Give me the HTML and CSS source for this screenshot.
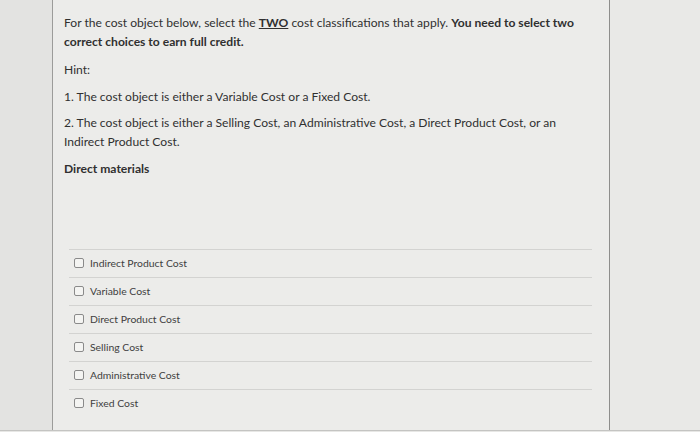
FILE: index.html
```html
<!DOCTYPE html>
<html>
<head>
<meta charset="utf-8">
<link rel="stylesheet" href="styles.css">
</head>
<body>
<div class="page">
  <div class="gutter"></div>
  <div class="panel">
    <div class="question">
      <p class="lead">For the cost object below, select the <u class="em">TWO</u> cost classifications that apply. <b>You need to select two correct choices to earn full credit.</b></p>
      <p class="hint">Hint:</p>
      <p class="item">1. The cost object is either a Variable Cost or a Fixed Cost.</p>
      <p class="item item2">2. The cost object is either a Selling Cost, an Administrative Cost, a Direct Product Cost, or an Indirect Product Cost.</p>
      <p class="object">Direct materials</p>
    </div>
    <ul class="options">
      <li class="option"><span class="box"></span>Indirect Product Cost</li>
      <li class="option"><span class="box"></span>Variable Cost</li>
      <li class="option"><span class="box"></span>Direct Product Cost</li>
      <li class="option"><span class="box"></span>Selling Cost</li>
      <li class="option"><span class="box"></span>Administrative Cost</li>
      <li class="option"><span class="box"></span>Fixed Cost</li>
    </ul>
  </div>
  <div class="aside"></div>
</div>
</body>
</html>
```

FILE: styles.css
```css
html, body {
  margin: 0;
  padding: 0;
  background: #e7e7e5;
}
body {
  font-family: Lato, "Open Sans", sans-serif;
  color: #303030;
}
.page {
  display: flex;
  width: 700px;
  height: 430px;
  border-bottom: 1px solid #c4c4c2;
}
.gutter {
  width: 52px;
  flex: none;
  background: #e3e3e1;
  border-right: 1px solid #9c9c9a;
}
.panel {
  width: 556px;
  flex: none;
  background: #ececea;
  border-right: 1px solid #8e8e8c;
}
.aside {
  flex: 1;
  background: #e9e9e7;
}
.question {
  padding: 13px 20px 0 11px;
  font-size: 12.1px;
  line-height: 19px;
  width: 518px;
}
.question p {
  margin: 0;
}
.question b, .em, .object {
  font-weight: bold;
}
.lead { margin-bottom: 9px !important; }
.hint { margin-bottom: 8px !important; }
.item { margin-bottom: 7px !important; }
.item2 { margin-bottom: 8px !important; }
.object { margin-left: 3px; }
.options {
  list-style: none;
  margin: 71px 0 0 16px;
  padding: 0;
  width: 523px;
  border-top: 1px solid #d3d3d1;
}
.option {
  display: flex;
  align-items: center;
  height: 25px;
  padding-bottom: 2px;
  border-bottom: 1px solid #d3d3d1;
  font-size: 10.4px;
  color: #404040;
  padding-left: 5px;
}
.option:last-child { border-bottom: none; }
.box {
  width: 8px;
  height: 8px;
  border: 1px solid #8a8a8a;
  border-radius: 2px;
  background: #f4f4f2;
  margin-right: 6px;
  flex: none;
}
```
